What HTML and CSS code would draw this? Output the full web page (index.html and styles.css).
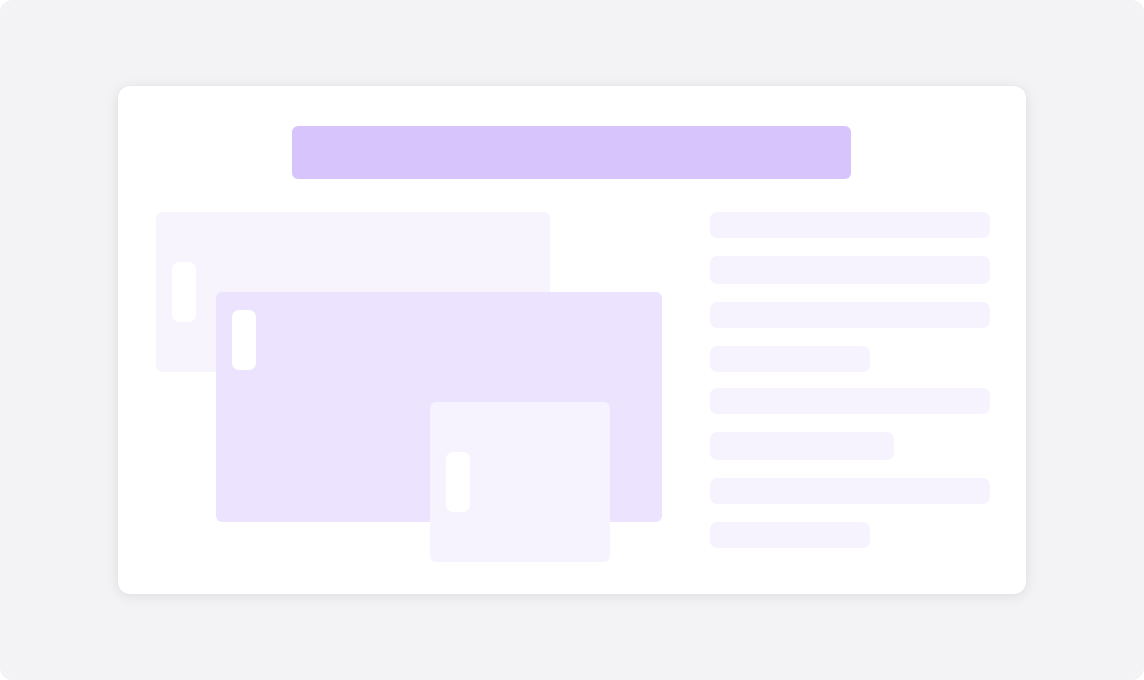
FILE: index.html
```html
<!DOCTYPE html>
<html>
<head>
<meta charset="utf-8">
<link rel="stylesheet" href="styles.css">
</head>
<body>
<div class="stage">
  <div class="card">
    <div class="header-bar"></div>
    <div class="content">
      <div class="diagram">
        <div class="win win-a"><span class="pill"></span></div>
        <div class="win win-b"><span class="pill"></span></div>
        <div class="win win-c"><span class="pill"></span></div>
      </div>
      <div class="lines">
        <div class="line"></div>
        <div class="line tall"></div>
        <div class="line"></div>
        <div class="line short"></div>
        <div class="line tight"></div>
        <div class="line mid tall"></div>
        <div class="line"></div>
        <div class="line short"></div>
      </div>
    </div>
  </div>
</div>
</body>
</html>
```
FILE: styles.css
```css
html, body {
  margin: 0;
  padding: 0;
  background: #ffffff;
}
.stage {
  width: 1144px;
  height: 680px;
  box-sizing: border-box;
  background: #f3f3f5;
  border-radius: 12px;
  padding: 86px 118px 0 118px;
}
.card {
  width: 908px;
  height: 508px;
  box-sizing: border-box;
  background: #ffffff;
  border-radius: 12px;
  box-shadow: 0 2px 14px rgba(0, 0, 0, 0.09), 0 0 2px rgba(0, 0, 0, 0.04);
  padding: 40px 36px 32px 38px;
  display: flex;
  flex-direction: column;
  align-items: center;
}
.header-bar {
  width: 559px;
  height: 53px;
  background: #d8c4fc;
  border-radius: 6px;
  margin-left: -3px;
}
.content {
  align-self: stretch;
  margin-top: 33px;
  display: flex;
  gap: 48px;
}
.diagram {
  position: relative;
  width: 506px;
  height: 350px;
  flex: none;
}
.win {
  position: absolute;
  border-radius: 6px;
}
.win-a {
  left: 0;
  top: 0;
  width: 394px;
  height: 160px;
  background: #f7f4fe;
}
.win-b {
  left: 60px;
  top: 80px;
  width: 446px;
  height: 230px;
  background: #ece4fe;
}
.win-c {
  left: 274px;
  top: 190px;
  width: 180px;
  height: 160px;
  background: #f6f3fe;
}
.pill {
  position: absolute;
  left: 16px;
  width: 24px;
  height: 60px;
  background: #ffffff;
  border-radius: 7px;
}
.win-a .pill { top: 50px; }
.win-b .pill { top: 18px; }
.win-c .pill { top: 50px; }
.lines {
  width: 280px;
  display: flex;
  flex-direction: column;
  gap: 18px;
}
.line {
  height: 26px;
  width: 280px;
  background: #f6f3fe;
  border-radius: 7px;
}
.line.tall { height: 28px; }
.line.short { width: 160px; }
.line.mid { width: 184px; }
.line.tight { margin-top: -2px; }
```
